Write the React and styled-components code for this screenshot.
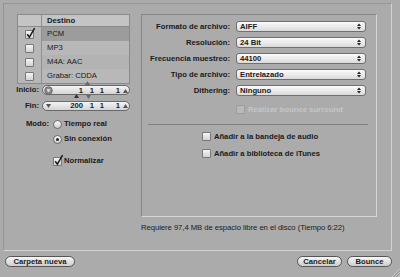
import React from 'react';
import styled, { createGlobalStyle } from 'styled-components';

const Global = createGlobalStyle`
  html, body { margin: 0; padding: 0; background: #ababab; }
  body {
    font-family: "Liberation Sans", Arial, sans-serif;
    font-size: 7.7px;
    color: #1a1a1a;
    line-height: 1;
  }
  * { box-sizing: border-box; }
`;

const Window = styled.div`
  position: relative;
  width: 400px;
  height: 277px;
  padding: 3px 8px 0 3px;
  display: flex;
  flex-direction: column;
  overflow: hidden;
`;

const Group = styled.div`
  height: 248px;
  border-top: 1px solid #959595;
  border-left: 1px solid #959595;
  border-right: 1px solid #d3d3d3;
  border-bottom: 1px solid #d3d3d3;
  display: grid;
  grid-template-columns: 126px 236px;
  grid-template-rows: 203px auto;
  column-gap: 11px;
  padding: 10px 14px 0 0;
`;

const LeftCol = styled.div`
  display: flex;
  flex-direction: column;
`;

const Table = styled.div`
  margin-left: 13px;
  width: 113px;
  border: 1px solid #8a8a8a;
  display: flex;
  flex-direction: column;
`;

const TRow = styled.div`
  display: grid;
  grid-template-columns: 24px 1fr;
  height: ${p => (p.$header ? 12 : 14)}px;
  border-bottom: ${p => (p.$header ? '1px solid #8a8a8a' : 'none')};
`;

const CheckCell = styled.div`
  border-right: 1px solid #8f8f8f;
  background: ${p => (p.$header ? '#c4c4c4' : '#b7b7b7')};
  display: flex;
  align-items: center;
  justify-content: center;
`;

const NameCell = styled.div`
  display: flex;
  align-items: center;
  padding-left: 5px;
  font-weight: ${p => (p.$header ? 'bold' : 'normal')};
  background: ${p => (p.$header ? '#c4c4c4' : p.$selected ? '#9c9c9c' : p.$alt ? '#b3b3b3' : '#b8b8b8')};
`;

const Box = styled.span`
  position: relative;
  display: inline-block;
  flex: none;
  width: 9px;
  height: 9px;
  border: 1px solid ${p => (p.$disabled ? '#9c9c9c' : '#777')};
  border-radius: 1px;
  background: ${p => (p.$disabled ? '#b9b9b9' : 'linear-gradient(#f6f6f6, #d2d2d2)')};
  svg { position: absolute; left: 0px; top: -4px; overflow: visible; }
`;

const Check = ({ checked, disabled }) => (
  <Box $disabled={disabled}>
    {checked && (
      <svg width="10" height="12" viewBox="0 0 10 12">
        <path d="M1.2 7.2 L3.4 10.2 L8.6 1.2" fill="none" stroke="#1a1a1a" strokeWidth="1.5" />
      </svg>
    )}
  </Box>
);

const SpinRow = styled.div`
  display: flex;
  align-items: center;
  margin-top: ${p => p.$mt}px;
  height: 10px;
`;

const SpinLabel = styled.span`
  width: 35px;
  text-align: right;
  font-weight: bold;
  margin-right: 3px;
`;

const Spin = styled.div`
  position: relative;
  width: 88px;
  height: 10px;
  border: 1px solid #6a6a6a;
  border-radius: 5px;
  background: linear-gradient(#f4f4f4, #d4d4d4);
  display: grid;
  grid-template-columns: 11px 30px 11px 10px 16px 1fr;
  align-items: center;
  font-weight: bold;
`;

const Slot = styled.span`
  text-align: right;
  padding-right: 1px;
`;

const IconSlot = styled.span`
  display: flex;
  align-items: center;
  justify-content: center;
`;

const Marker = styled.svg`
  position: absolute;
  left: ${p => p.$x}px;
  top: ${p => p.$y}px;
`;

const ModeGrid = styled.div`
  display: grid;
  grid-template-columns: 45px auto;
  column-gap: 4px;
  row-gap: 5px;
  margin-top: 8px;
  grid-auto-rows: 10px;
  align-items: center;
  font-weight: bold;
`;

const ModeLabel = styled.span`
  text-align: right;
`;

const Option = styled.label`
  display: flex;
  align-items: center;
  gap: 2px;
  grid-column: 2;
  margin-top: ${p => p.$mt || 0}px;
`;

const Radio = styled.span`
  width: 9px;
  height: 9px;
  border-radius: 50%;
  border: 1px solid #6a6a6a;
  background: linear-gradient(#f8f8f8, #d0d0d0);
  display: flex;
  align-items: center;
  justify-content: center;
  &::after {
    content: '';
    width: 3px;
    height: 3px;
    border-radius: 50%;
    background: ${p => (p.$on ? '#222' : 'transparent')};
  }
`;

const Inner = styled.div`
  border-top: 1px solid #868686;
  border-left: 1px solid #868686;
  border-right: 1px solid #d6d6d6;
  border-bottom: 1px solid #d6d6d6;
  padding-top: 6px;
  display: flex;
  flex-direction: column;
`;

const Form = styled.div`
  display: grid;
  grid-template-columns: 88px 130px;
  column-gap: 6px;
  row-gap: 5px;
  grid-auto-rows: 11px;
  align-items: center;
`;

const FormLabel = styled.span`
  text-align: right;
  font-weight: bold;
`;

const Popup = styled.div`
  height: 11px;
  border: 1px solid #707070;
  border-radius: 3px;
  background: linear-gradient(#fbfbfb, #dadada);
  display: flex;
  align-items: center;
  justify-content: space-between;
  padding: 0 4px 0 3px;
  font-weight: bold;
`;

const Arrows = () => (
  <svg width="4" height="7" viewBox="0 0 4 7">
    <path d="M0 3 L2 0.5 L4 3 Z M0 4 L2 6.5 L4 4 Z" fill="#222" />
  </svg>
);

const CheckLine = styled.label`
  display: flex;
  align-items: center;
  gap: 3px;
  font-weight: bold;
  color: ${p => (p.$disabled ? '#c6c6c6' : '#1a1a1a')};
  margin-top: ${p => p.$mt || 0}px;
`;

const DisabledRow = styled.div`
  margin: 9px 0 0 94px;
`;

const Separator = styled.hr`
  margin: 10px 8px 0 6px;
  border: none;
  height: 1px;
  background: #7f7f7f;
`;

const ExtraList = styled.div`
  align-self: center;
  display: flex;
  flex-direction: column;
  margin: 7px 0 0 4px;
`;

const Footnote = styled.div`
  grid-column: 2;
  padding-top: 7px;
  letter-spacing: -0.05px;
`;

const Footer = styled.div`
  display: flex;
  align-items: center;
  margin-top: 5px;
  padding: 0 0 0 2px;
`;

const Button = styled.button`
  height: 11px;
  width: ${p => p.$w}px;
  margin-left: ${p => p.$ml || 0}px;
  padding: 0;
  border: 1px solid #555;
  border-radius: 6px;
  background: linear-gradient(#f6f6f6, #cdcdcd);
  font-family: "Liberation Sans", Arial, sans-serif;
  font-size: 7.7px;
  font-weight: bold;
  color: #1a1a1a;
  line-height: 1;
`;

const Spacer = styled.div`
  flex: 1;
`;

const Grip = styled.svg`
  position: absolute;
  right: 0;
  bottom: 0;
`;

const rows = [
  { name: 'PCM', checked: true, selected: true },
  { name: 'MP3' },
  { name: 'M4A: AAC', alt: true },
  { name: 'Grabar: CDDA' },
];

const form = [
  ['Formato de archivo:', 'AIFF'],
  ['Resolución:', '24 Bit'],
  ['Frecuencia muestreo:', '44100'],
  ['Tipo de archivo:', 'Entrelazado'],
  ['Dithering:', 'Ninguno'],
];

const Up = ({ c = '#555' }) => (
  <svg width="5" height="4" viewBox="0 0 5 4"><path d="M0 4 L2.5 0 L5 4 Z" fill={c} /></svg>
);

export default function App() {
  return (
    <>
      <Global />
      <Window>
        <Group>
          <LeftCol>
            <Table>
              <TRow $header>
                <CheckCell $header />
                <NameCell $header>Destino</NameCell>
              </TRow>
              {rows.map(r => (
                <TRow key={r.name}>
                  <CheckCell><Check checked={r.checked} /></CheckCell>
                  <NameCell $selected={r.selected} $alt={r.alt}>{r.name}</NameCell>
                </TRow>
              ))}
            </Table>
            <SpinRow $mt={1}>
              <SpinLabel>Inicio:</SpinLabel>
              <Spin>
                <IconSlot>
                  <svg width="9" height="9" viewBox="0 0 9 9">
                    <circle cx="4.5" cy="4.5" r="3.8" fill="#8e8e8e" stroke="#5a5a5a" strokeWidth="0.8" />
                    <path d="M2.6 3.3 L6.4 3.3 L4.5 6.2 Z" fill="#e8e8e8" />
                  </svg>
                </IconSlot>
                <Slot>1</Slot><Slot>1</Slot><Slot>1</Slot><Slot>1</Slot>
                <IconSlot><Up /></IconSlot>
                <Marker $x={42} $y={-5} width="5" height="4" viewBox="0 0 5 4"><path d="M0 4 L2.5 0 L5 4 Z" fill="#6a6a6a" /></Marker>
                <Marker $x={31} $y={8} width="5" height="4" viewBox="0 0 5 4"><path d="M0 4 L2.5 0 L5 4 Z" fill="#333" /></Marker>
                <Marker $x={43} $y={9} width="5" height="4" viewBox="0 0 5 4"><path d="M0 0 L2.5 4 L5 0 Z" fill="#6a6a6a" /></Marker>
              </Spin>
            </SpinRow>
            <SpinRow $mt={6}>
              <SpinLabel>Fin:</SpinLabel>
              <Spin>
                <IconSlot>
                  <svg width="5" height="4" viewBox="0 0 5 4"><path d="M0 0 L5 0 L2.5 4 Z" fill="#555" /></svg>
                </IconSlot>
                <Slot>200</Slot><Slot>1</Slot><Slot>1</Slot><Slot>1</Slot>
                <IconSlot><Up /></IconSlot>
              </Spin>
            </SpinRow>
            <ModeGrid>
              <ModeLabel>Modo:</ModeLabel>
              <Option><Radio />Tiempo real</Option>
              <Option><Radio $on />Sin conexión</Option>
              <Option $mt={14}><Check checked />Normalizar</Option>
            </ModeGrid>
          </LeftCol>

          <Inner>
            <Form>
              {form.map(([l, v]) => (
                <React.Fragment key={l}>
                  <FormLabel>{l}</FormLabel>
                  <Popup><span>{v}</span><Arrows /></Popup>
                </React.Fragment>
              ))}
            </Form>
            <DisabledRow>
              <CheckLine $disabled><Check disabled />Realizar bounce surround</CheckLine>
            </DisabledRow>
            <Separator />
            <ExtraList>
              <CheckLine><Check />Añadir a la bandeja de audio</CheckLine>
              <CheckLine $mt={8}><Check />Añadir a biblioteca de iTunes</CheckLine>
            </ExtraList>
          </Inner>

          <Footnote>Requiere 97,4 MB de espacio libre en el disco (Tiempo 6:22)</Footnote>
        </Group>

        <Footer>
          <Button $w={70}>Carpeta nueva</Button>
          <Spacer />
          <Button $w={45}>Cancelar</Button>
          <Button $w={45} $ml={5}>Bounce</Button>
        </Footer>
        <Grip width="10" height="10" viewBox="0 0 10 10">
          <path d="M10 2 L2 10 M10 5 L5 10 M10 8 L8 10" stroke="#d8d8d8" strokeWidth="0.8" />
          <path d="M10 3 L3 10 M10 6 L6 10" stroke="#7a7a7a" strokeWidth="0.6" />
        </Grip>
      </Window>
    </>
  );
}
